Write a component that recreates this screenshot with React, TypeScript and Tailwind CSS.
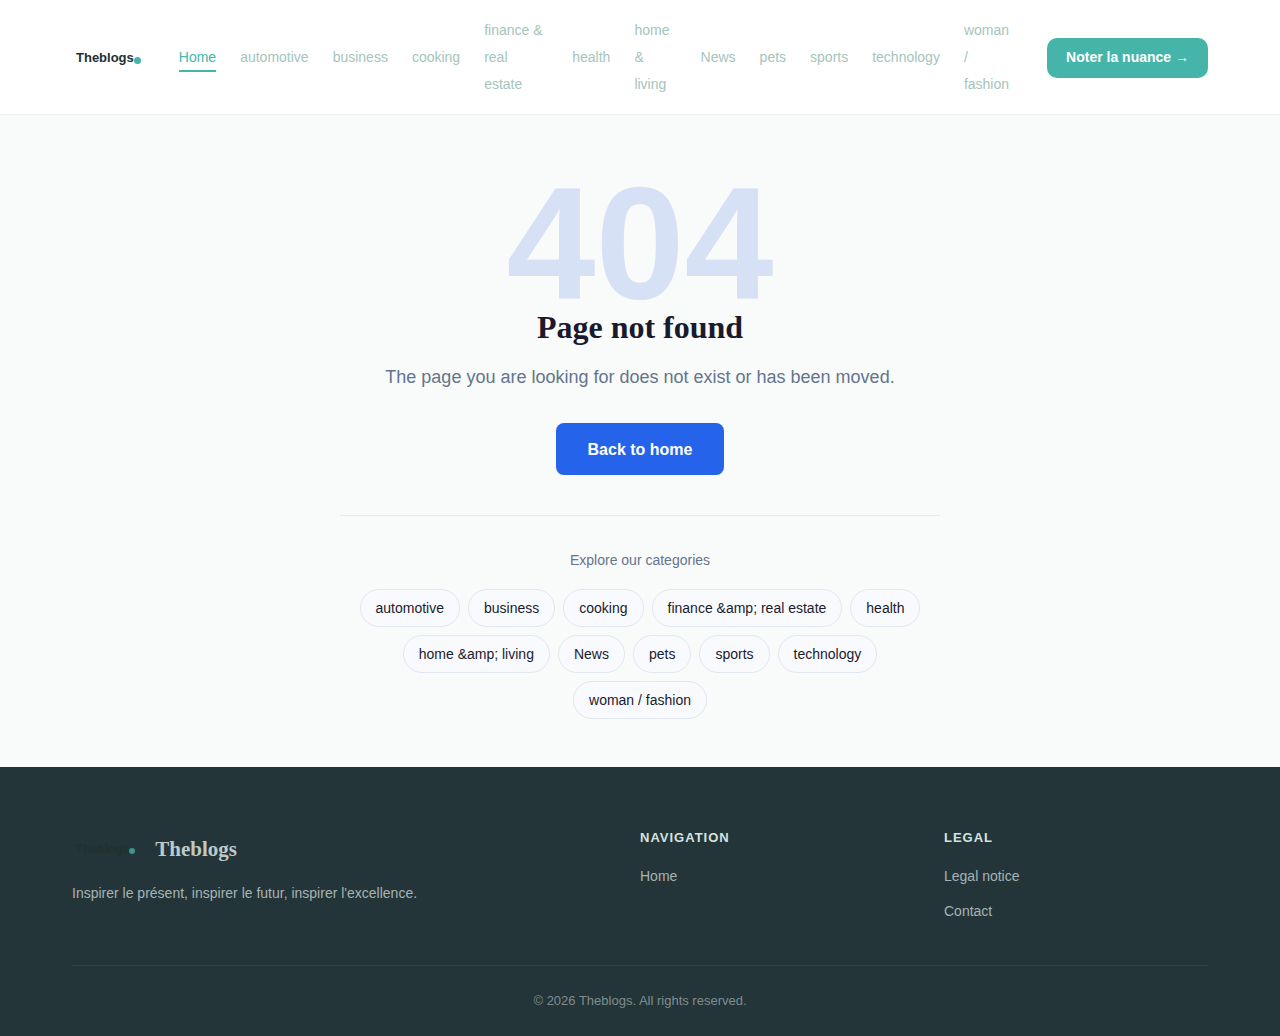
import React from 'react'

const navItems = [
  'Home',
  'automotive',
  'business',
  'cooking',
  'finance & real estate',
  'health',
  'home & living',
  'News',
  'pets',
  'sports',
  'technology',
  'woman / fashion',
]

const categories = [
  'automotive',
  'business',
  'cooking',
  'finance &amp; real estate',
  'health',
  'home &amp; living',
  'News',
  'pets',
  'sports',
  'technology',
  'woman / fashion',
]

function Header() {
  return (
    <header className="bg-white border-b border-[#eef3f2]">
      <div className="max-w-[1200px] mx-auto px-8 pt-[17px] pb-4 flex items-center">
        <a href="#" className="shrink-0 flex items-center pl-1 mr-[38px] text-[13px] font-bold text-[#22302f]">
          Theblogs
          <span className="w-[7px] h-[7px] mt-1.5 rounded-full bg-[#45b5aa]" />
        </a>
        <nav className="flex-1 min-w-0 mr-8">
          <ul className="flex items-center gap-6 text-[14px] leading-[27px] text-[#a5c4bb]">
            {navItems.map((item) => (
              <li key={item}>
                <a href="#" className={item === 'Home' ? 'pb-[5px] border-b-2 border-[#45b5aa] text-[#45b5aa]' : ''}>
                  {item}
                </a>
              </li>
            ))}
          </ul>
        </nav>
        <a
          href="#"
          className="shrink-0 h-10 px-[19px] flex items-center rounded-[10px] bg-[#45b5aa] text-white text-[14px] font-bold whitespace-nowrap"
        >
          Noter la nuance →
        </a>
      </div>
    </header>
  )
}

function NotFound() {
  return (
    <main className="py-12 text-center">
      <div className="max-w-[600px] mx-auto">
        <div className="text-[160px] leading-[144px] pt-2 font-bold text-[#d7e1f6]">404</div>
        <h1 className="mt-[-8px] mb-4 text-[32px] leading-10 pt-0 font-bold text-[#1a1a2e] font-['Liberation_Serif',serif]">
          Page not found
        </h1>
        <p className="text-lg leading-7 text-[#64748b]">The page you are looking for does not exist or has been moved.</p>
        <a href="#" className="mt-8 inline-flex items-center h-[52px] px-8 pt-0.5 rounded-lg bg-[#2563eb] text-white text-base font-bold align-top">
          Back to home
        </a>
        {/* Categories */}
        <div className="mt-10 pt-8 border-t border-[#e2e8f0]">
          <p className="mb-[17px] text-[14px] leading-6 text-[#64748b]">Explore our categories</p>
          <div className="flex flex-wrap justify-center gap-2">
            {categories.map((name) => (
              <a
                key={name}
                href="#"
                className="h-[38px] px-[15px] flex items-center rounded-full border border-[#e2e8f0] bg-[#f9fafd] text-[14px] text-[#1a1a2e]"
              >
                {name}
              </a>
            ))}
          </div>
        </div>
      </div>
    </main>
  )
}

function Footer() {
  return (
    <footer className="bg-[#233539] text-[#a7b3b3]">
      <div className="max-w-[1200px] mx-auto px-8 pt-14">
        <div className="grid grid-cols-[2fr_1fr_1fr] gap-10 pb-9 border-b border-[#2e4144]">
          <div className="pt-2.5">
            <div className="flex items-center">
              <a href="#" className="flex items-center pl-1 mr-5 text-[12px] font-bold text-[#22302f]">
                Theblogs
                <span className="w-1.5 h-1.5 mt-1 rounded-full bg-[#3a9690]" />
              </a>
              <span className="text-[21px] leading-8 font-bold text-[#bfc9c8] font-['Liberation_Serif',serif]">Theblogs</span>
            </div>
            <p className="mt-4 text-[14px] leading-6">Inspirer le présent, inspirer le futur, inspirer l'excellence.</p>
          </div>
          <div>
            <h2 className="text-[13px] leading-[30px] font-bold tracking-[1px] text-[#d5e2e0]">NAVIGATION</h2>
            <ul className="mt-1.5 text-[14px] leading-[35px]">
              <li><a href="#">Home</a></li>
            </ul>
          </div>
          <div>
            <h2 className="text-[13px] leading-[30px] font-bold tracking-[1px] text-[#d5e2e0]">LEGAL</h2>
            <ul className="mt-1.5 text-[14px] leading-[35px]">
              <li><a href="#">Legal notice</a></li>
              <li><a href="#">Contact</a></li>
            </ul>
          </div>
        </div>
        <p className="py-6 text-center text-[13px] leading-[22px] text-[#7f8d8f]">© 2026 Theblogs. All rights reserved.</p>
      </div>
    </footer>
  )
}

export default function App() {
  return (
    <div className="min-h-screen bg-[#f9fbfa] font-['Liberation_Sans',Arial,sans-serif]">
      <Header />
      <NotFound />
      <Footer />
    </div>
  )
}
